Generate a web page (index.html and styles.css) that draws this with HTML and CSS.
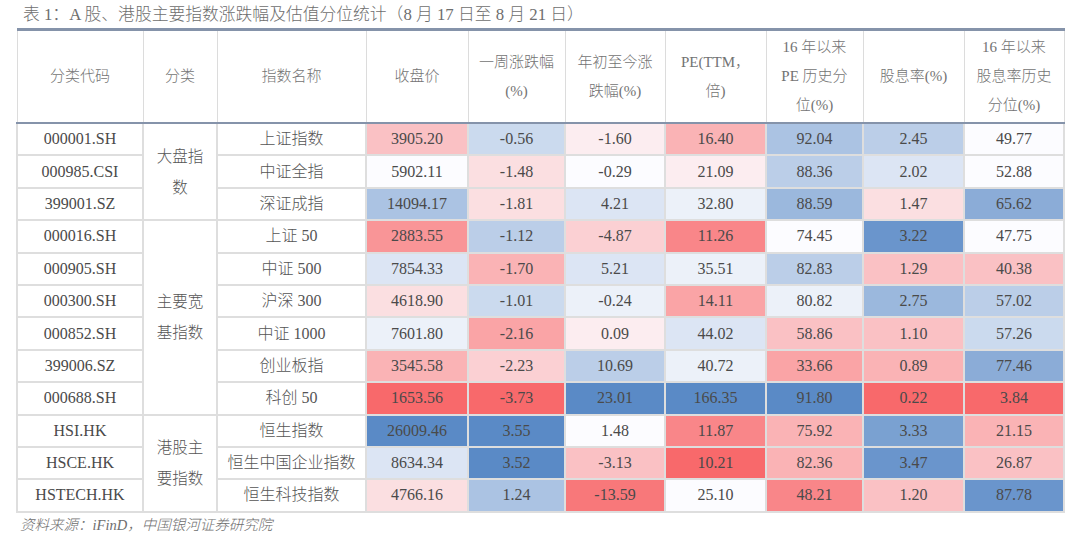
FILE: index.html
```html
<!DOCTYPE html>
<html lang="zh-CN">
<head>
<meta charset="utf-8">
<title>表1</title>
<link rel="stylesheet" href="styles.css">
</head>
<body>
<div class="page">
  <div class="title">表 1：A 股、港股主要指数涨跌幅及估值分位统计（8 月 17 日至 8 月 21 日）</div>
  <table class="grid">
    <colgroup>
      <col class="c1"><col class="c2"><col class="c3"><col class="c4"><col class="c5">
      <col class="c6"><col class="c7"><col class="c8"><col class="c9"><col class="c10">
    </colgroup>
    <thead>
      <tr>
        <th>分类代码</th>
        <th>分类</th>
        <th>指数名称</th>
        <th>收盘价</th>
        <th>一周涨跌幅<br>(%)</th>
        <th>年初至今涨<br>跌幅(%)</th>
        <th>PE(TTM，<br>倍)</th>
        <th>16 年以来<br>PE 历史分<br>位(%)</th>
        <th>股息率(%)</th>
        <th>16 年以来<br>股息率历史<br>分位(%)</th>
      </tr>
    </thead>
    <tbody>
      <tr>
        <td>000001.SH</td>
        <td rowspan="3" class="group">大盘指<br>数</td>
        <td class="name">上证指数</td>
        <td class="r4">3905.20</td><td class="b3">-0.56</td><td class="r1">-1.60</td><td class="r5">16.40</td><td class="b5">92.04</td><td class="b4">2.45</td><td class="w">49.77</td>
      </tr>
      <tr>
        <td>000985.CSI</td>
        <td class="name">中证全指</td>
        <td class="w">5902.11</td><td class="r2">-1.48</td><td class="w">-0.29</td><td class="r1">21.09</td><td class="b4">88.36</td><td class="b2">2.02</td><td class="w">52.88</td>
      </tr>
      <tr>
        <td>399001.SZ</td>
        <td class="name">深证成指</td>
        <td class="b5">14094.17</td><td class="r2">-1.81</td><td class="b2">4.21</td><td class="b1">32.80</td><td class="b6">88.59</td><td class="r2">1.47</td><td class="b7">65.62</td>
      </tr>
      <tr>
        <td>000016.SH</td>
        <td rowspan="6" class="group">主要宽<br>基指数</td>
        <td class="name">上证 50</td>
        <td class="r7">2883.55</td><td class="b4">-1.12</td><td class="r3">-4.87</td><td class="r8">11.26</td><td class="w">74.45</td><td class="b9">3.22</td><td class="w">47.75</td>
      </tr>
      <tr>
        <td>000905.SH</td>
        <td class="name">中证 500</td>
        <td class="b2">7854.33</td><td class="r5">-1.70</td><td class="b2">5.21</td><td class="b1">35.51</td><td class="b4">82.83</td><td class="r4">1.29</td><td class="r4">40.38</td>
      </tr>
      <tr>
        <td>000300.SH</td>
        <td class="name">沪深 300</td>
        <td class="r2">4618.90</td><td class="b3">-1.01</td><td class="b1">-0.24</td><td class="r6">14.11</td><td class="b1">80.82</td><td class="b6">2.75</td><td class="b4">57.02</td>
      </tr>
      <tr>
        <td>000852.SH</td>
        <td class="name">中证 1000</td>
        <td class="b1">7601.80</td><td class="r6">-2.16</td><td class="r1">0.09</td><td class="b2">44.02</td><td class="r4">58.86</td><td class="r4">1.10</td><td class="b3">57.26</td>
      </tr>
      <tr>
        <td>399006.SZ</td>
        <td class="name">创业板指</td>
        <td class="r5">3545.58</td><td class="r3">-2.23</td><td class="b4">10.69</td><td class="b1">40.72</td><td class="r6">33.66</td><td class="r5">0.89</td><td class="b7">77.46</td>
      </tr>
      <tr>
        <td>000688.SH</td>
        <td class="name">科创 50</td>
        <td class="r10">1653.56</td><td class="r10">-3.73</td><td class="b10">23.01</td><td class="b10">166.35</td><td class="b10">91.80</td><td class="r10">0.22</td><td class="r10">3.84</td>
      </tr>
      <tr>
        <td>HSI.HK</td>
        <td rowspan="3" class="group">港股主<br>要指数</td>
        <td class="name">恒生指数</td>
        <td class="b10">26009.46</td><td class="b10">3.55</td><td class="w">1.48</td><td class="r8">11.87</td><td class="r5">75.92</td><td class="b8">3.33</td><td class="r5">21.15</td>
      </tr>
      <tr>
        <td>HSCE.HK</td>
        <td class="name">恒生中国企业指数</td>
        <td class="b2">8634.34</td><td class="b10">3.52</td><td class="r4">-3.13</td><td class="r10">10.21</td><td class="r5">82.36</td><td class="b9">3.47</td><td class="r4">26.87</td>
      </tr>
      <tr>
        <td>HSTECH.HK</td>
        <td class="name">恒生科技指数</td>
        <td class="r2">4766.16</td><td class="b5">1.24</td><td class="r9">-13.59</td><td class="w">25.10</td><td class="r8">48.21</td><td class="r4">1.20</td><td class="b9">87.78</td>
      </tr>
    </tbody>
  </table>
  <div class="source">资料来源：iFinD，中国银河证券研究院</div>
</div>
</body>
</html>
```

FILE: styles.css
```css
html, body {
  margin: 0;
  padding: 0;
  background: #ffffff;
}

.page {
  width: 1080px;
  height: 549px;
  overflow: hidden;
  font-family: "Liberation Serif", "Noto Sans CJK SC", serif;
}

.title {
  padding: 5px 0 0 23px;
  height: 25px;
  box-sizing: border-box;
  font-size: 16.8px;
  line-height: 20px;
  color: #6e6e6e;
  font-weight: 300;
}

.grid {
  margin-left: 16px;
  margin-top: 3px;
  border-collapse: collapse;
  table-layout: fixed;
  width: 1047px;
  border-top: 3px solid #8593aa;
  border-bottom: 2px solid #8593aa;
}

.c1 { width: 126px; }
.c2 { width: 74px; }
.c3 { width: 149px; }
.c4 { width: 102px; }
.c5 { width: 97px; }
.c6 { width: 100px; }
.c7 { width: 101px; }
.c8 { width: 97px; }
.c9 { width: 101px; }
.c10 { width: 100px; }

.grid th {
  height: 91px;
  padding: 0 2px;
  font-weight: 300;
  font-size: 15px;
  line-height: 29px;
  color: #737373;
  border: 1.5px solid #dcdcdc;
  border-bottom: 2px solid #8593aa;
  vertical-align: middle;
  text-align: center;
}

.grid td {
  height: 30.4px;
  padding: 0;
  font-size: 16px;
  line-height: 20px;
  color: #4a4a4a;
  text-align: center;
  vertical-align: middle;
  border: 2px solid #dedede;
  white-space: nowrap;
}

.grid td.name,
.grid td.group {
  font-weight: 300;
  color: #555555;
}

.grid td.group {
  line-height: 31px;
  font-size: 15.5px;
}

.source {
  padding: 0 0 0 20px;
  font-size: 14.5px;
  font-style: italic;
  font-weight: 300;
  color: #6e6e6e;
}

/* heat scale: white -> red (low) / white -> blue (high) */
.w   { background: #fcfcff; }
.r1  { background: #fcedf0; }
.r2  { background: #fbdfe1; }
.r3  { background: #fbd0d3; }
.r4  { background: #fac1c4; }
.r5  { background: #fab3b5; }
.r6  { background: #faa4a6; }
.r7  { background: #f99597; }
.r8  { background: #f98689; }
.r9  { background: #f8787a; }
.r10 { background: #f8696b; }
.b1  { background: #ecf1f9; }
.b2  { background: #dce5f4; }
.b3  { background: #cbdaee; }
.b4  { background: #bbcee8; }
.b5  { background: #abc3e3; }
.b6  { background: #9bb8dd; }
.b7  { background: #8bacd7; }
.b8  { background: #7aa1d1; }
.b9  { background: #6a95cc; }
.b10 { background: #5a8ac6; }
```
